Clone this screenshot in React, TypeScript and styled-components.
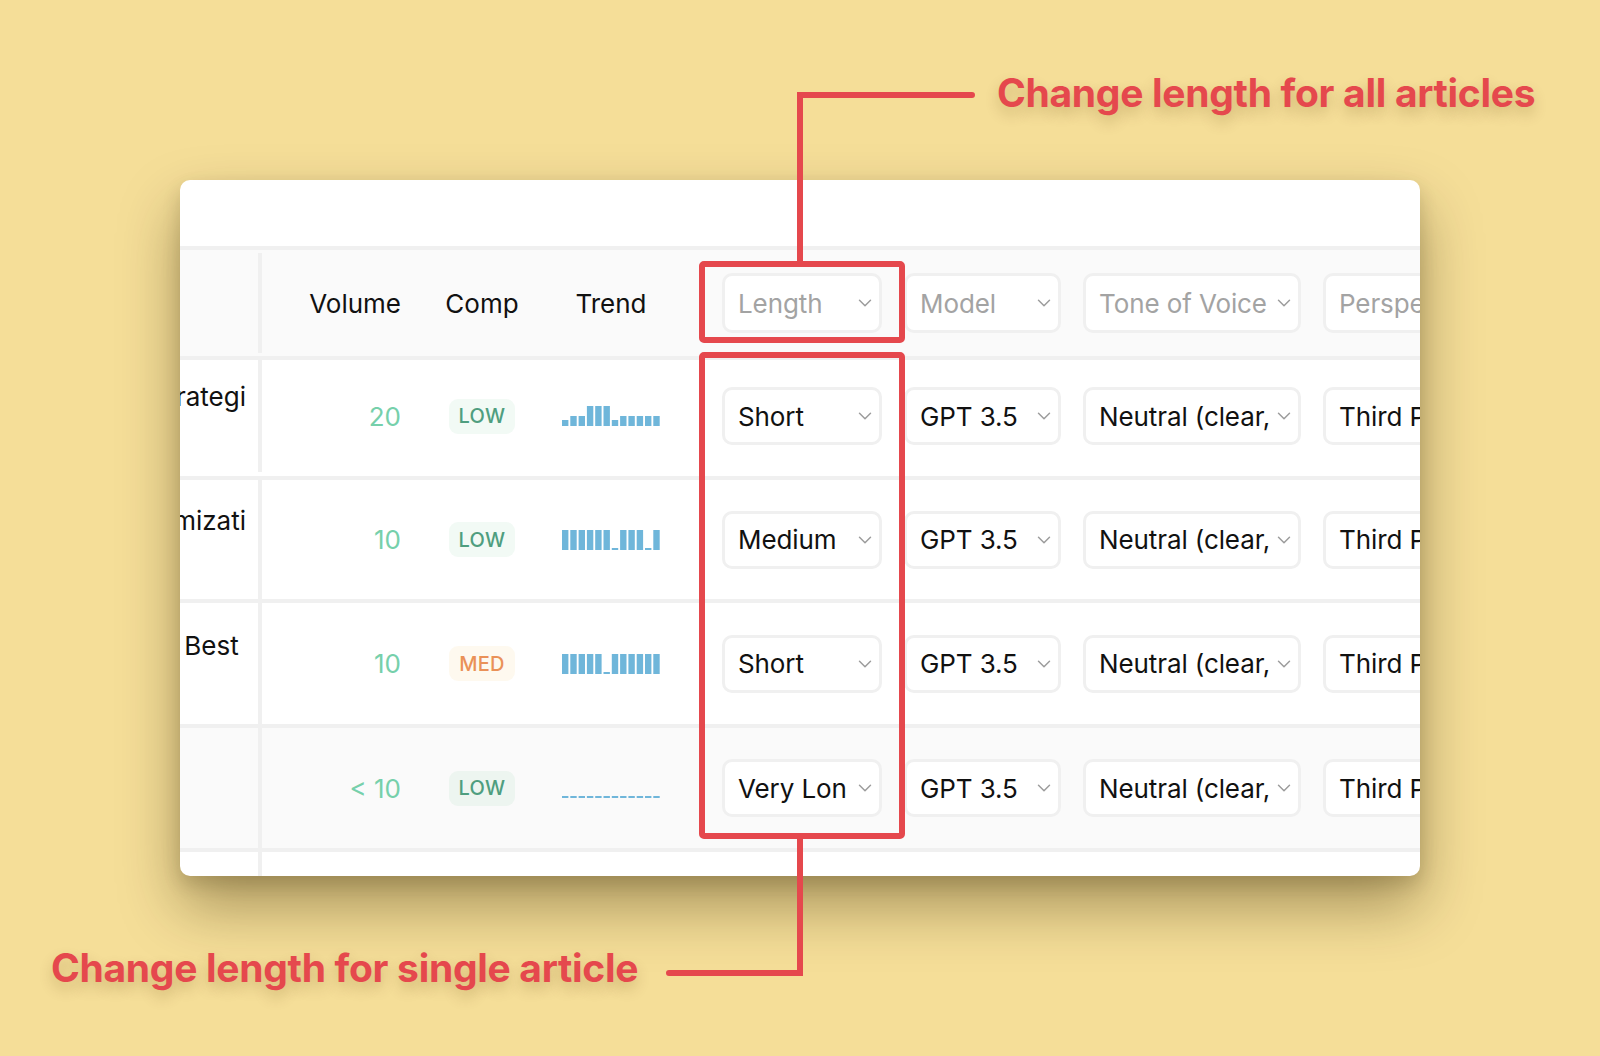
import React from 'react';
import styled, { createGlobalStyle } from 'styled-components';
import { ChevronDown } from 'lucide-react';

//Global
const GlobalStyle = createGlobalStyle`
  html, body {
    margin: 0;
    padding: 0;
  }

  body {
    background: #f5de98;
    font-family: Inter, "Noto Sans", sans-serif;
  }
`;

//Layout
const Page = styled.div`
  position: relative;
  width: 1600px;
  height: 1056px;
  overflow: hidden;
  box-sizing: border-box;
  padding: 180px 0 0 180px;
  background: #f5de98;
`;

const Card = styled.div`
  width: 1240px;
  height: 696px;
  display: flex;
  flex-direction: column;
  overflow: hidden;
  background: #fff;
  border-radius: 10px;
  box-shadow: 0 30px 60px rgba(50, 35, 0, 0.4), 0 8px 18px rgba(50, 35, 0, 0.16);
`;

const TopBar = styled.div`
  flex: none;
  height: 66px;
`;

const COLUMNS = '82px 151px 138px 160px 182px 179px 240px 240px';

const Row = styled.div<{ $h: number; $shade?: boolean; $top?: boolean; $padBottom?: number }>`
  flex: none;
  display: grid;
  grid-template-columns: ${COLUMNS};
  height: ${(p) => p.$h - (p.$padBottom || 0)}px;
  padding-bottom: ${(p) => p.$padBottom || 0}px;
  background: ${(p) => (p.$shade ? '#fafafa' : '#fff')};
  border-top: ${(p) => (p.$top ? '4px solid #f0f0f0' : 'none')};
  border-bottom: 4px solid #f0f0f0;
`;

const Filler = styled.div`
  flex: 1;
  display: grid;
  grid-template-columns: ${COLUMNS};
`;

//Cells
const TitleCell = styled.div<{ $inset?: boolean }>`
  margin: ${(p) => (p.$inset ? '3px 0' : '0')};
  padding-right: 12px;
  border-right: 4px solid #f0f0f0;
  min-width: 0;
`;

const TitleClip = styled.div<{ $pad: number }>`
  display: flex;
  justify-content: flex-end;
  overflow: hidden;
  padding-top: ${(p) => p.$pad}px;
  font-size: 26px;
  line-height: 32px;
  color: #111;
  white-space: pre;
`;

const HeadLabel = styled.div<{ $justify: string; $padRight?: number }>`
  display: flex;
  align-items: center;
  justify-content: ${(p) => p.$justify};
  padding-right: ${(p) => p.$padRight || 0}px;
  font-size: 26px;
  color: #111;
`;

const TrendHead = styled.div`
  display: flex;
  align-items: center;
  padding-left: 11px;
`;

const TrendLabel = styled.div`
  width: 98px;
  text-align: center;
  font-size: 26px;
  color: #111;
`;

const VolumeCell = styled.div`
  display: flex;
  align-items: center;
  justify-content: flex-end;
  padding-right: 12px;
  font-size: 26px;
  color: #76d0ab;
`;

const CompCell = styled.div`
  display: flex;
  align-items: center;
  justify-content: center;
`;

const Badge = styled.span<{ $tone: 'low' | 'med' }>`
  display: inline-flex;
  align-items: center;
  height: 35px;
  padding: 0 10px;
  border-radius: 9px;
  font-size: 20px;
  font-weight: 500;
  letter-spacing: 0.3px;
  color: ${(p) => (p.$tone === 'low' ? '#4f9e7f' : '#ea9158')};
  background: ${(p) => (p.$tone === 'low' ? 'rgba(70, 180, 110, 0.07)' : 'rgba(240, 190, 80, 0.09)')};
`;

const TrendCell = styled.div`
  display: flex;
  align-items: center;
  padding-left: 11px;
`;

const SelectCell = styled.div`
  display: flex;
  align-items: center;
  padding-left: 11px;
`;

const Select = styled.div<{ $w: number; $h: number; $placeholder?: boolean }>`
  flex: none;
  box-sizing: border-box;
  width: ${(p) => p.$w}px;
  height: ${(p) => p.$h}px;
  display: flex;
  align-items: center;
  padding: 0 3px 0 13px;
  border: 3px solid #f0f0f0;
  border-radius: 10px;
  background: #fff;
  font-size: 26px;
  letter-spacing: -0.1px;
  color: ${(p) => (p.$placeholder ? '#a3a3a3' : '#111')};
`;

const SelectText = styled.span`
  flex: 1;
  min-width: 0;
  overflow: hidden;
  white-space: nowrap;
`;

const Chevron = styled(ChevronDown)<{ $gap: number }>`
  flex: none;
  margin-left: ${(p) => p.$gap}px;
  color: #9c9c9c;
`;

//Annotations
const Overlay = styled.svg`
  position: absolute;
  top: 0;
  left: 0;
  pointer-events: none;
`;

const Label = styled.div<{ $x: number; $y: number }>`
  position: absolute;
  left: ${(p) => p.$x}px;
  top: ${(p) => p.$y}px;
  font-size: 39px;
  line-height: 39px;
  font-weight: 700;
  letter-spacing: -0.3px;
  color: #e5484d;
  white-space: nowrap;
  text-shadow: 0 7px 14px rgba(90, 60, 0, 0.24);
`;

//Data
type Article = {
  title: string;
  pad: number;
  h: number;
  padBottom?: number;
  volume: string;
  comp: 'low' | 'med';
  trend: number[];
  length: string;
  shade?: boolean;
};

const ARTICLES: Article[] = [
  { title: 'Content Marketing Strategi', pad: 21, h: 116, padBottom: 4, volume: '20', comp: 'low', trend: [6, 10, 10, 20, 20, 20, 6, 10, 10, 10, 10, 10], length: 'Short' },
  { title: 'Search Engine Optimizati', pad: 25, h: 119, volume: '10', comp: 'low', trend: [20, 20, 20, 20, 20, 20, 2, 20, 20, 20, 2, 20], length: 'Medium' },
  { title: 'SEO Copywriting Best ', pad: 27, h: 121, volume: '10', comp: 'med', trend: [20, 20, 20, 20, 20, 2, 20, 20, 20, 20, 20, 20], length: 'Short' },
  { title: '', pad: 25, h: 120, volume: '< 10', comp: 'low', trend: [2, 2, 2, 2, 2, 2, 2, 2, 2, 2, 2, 2], length: 'Very Long', shade: true },
];

const Trend = ({ values }: { values: number[] }) => (
  <svg width="98" height="20" viewBox="0 0 98 20">
    {values.map((v, i) => (
      <rect key={i} x={i * 8.3} y={20 - v} width={6.4} height={v} fill="#6fb6da" />
    ))}
  </svg>
);

type DropdownProps = { w: number; h: number; value: string; placeholder?: boolean; gap?: number };

const Dropdown = ({ w, h, value, placeholder, gap = 3 }: DropdownProps) => (
  <SelectCell>
    <Select $w={w} $h={h} $placeholder={placeholder}>
      <SelectText>{value}</SelectText>
      <Chevron size={22} strokeWidth={1.6} $gap={gap} />
    </Select>
  </SelectCell>
);

const App = () => {
  return (
    <Page>
      <GlobalStyle />

      <Card>
        <TopBar />

        <Row $h={106} $shade $top>
          <TitleCell $inset />
          <HeadLabel $justify="flex-end" $padRight={12}>Volume</HeadLabel>
          <HeadLabel $justify="center">Comp</HeadLabel>
          <TrendHead>
            <TrendLabel>Trend</TrendLabel>
          </TrendHead>
          <Dropdown w={160} h={60} value="Length" placeholder gap={7} />
          <Dropdown w={157} h={60} value="Model" placeholder />
          <Dropdown w={218} h={60} value="Tone of Voice" placeholder />
          <Dropdown w={218} h={60} value="Perspective" placeholder />
        </Row>

        {ARTICLES.map((a, i) => (
          <Row key={i} $h={a.h} $shade={a.shade} $padBottom={a.padBottom}>
            <TitleCell>
              <TitleClip $pad={a.pad}>
                <span>{a.title}</span>
              </TitleClip>
            </TitleCell>
            <VolumeCell>{a.volume}</VolumeCell>
            <CompCell>
              <Badge $tone={a.comp}>{a.comp === 'low' ? 'LOW' : 'MED'}</Badge>
            </CompCell>
            <TrendCell>
              <Trend values={a.trend} />
            </TrendCell>
            <Dropdown w={160} h={58} value={a.length} gap={7} />
            <Dropdown w={157} h={58} value="GPT 3.5" />
            <Dropdown w={218} h={58} value="Neutral (clear, concise)" />
            <Dropdown w={218} h={58} value="Third Person" />
          </Row>
        ))}

        <Filler>
          <TitleCell />
        </Filler>
      </Card>

      <Overlay width="1600" height="1056" viewBox="0 0 1600 1056">
        <g fill="none" stroke="#e5484d" strokeWidth="6" strokeLinecap="round">
          <path d="M972 95 H800 V261" />
          <rect x="702" y="264" width="200" height="76" rx="2" />
          <rect x="702" y="355" width="200" height="481" rx="2" />
          <path d="M800 839 V973 H669" />
        </g>
      </Overlay>

      <Label $x={997} $y={73}>Change length for all articles</Label>
      <Label $x={51} $y={948}>Change length for single article</Label>
    </Page>
  );
};

export default App;
